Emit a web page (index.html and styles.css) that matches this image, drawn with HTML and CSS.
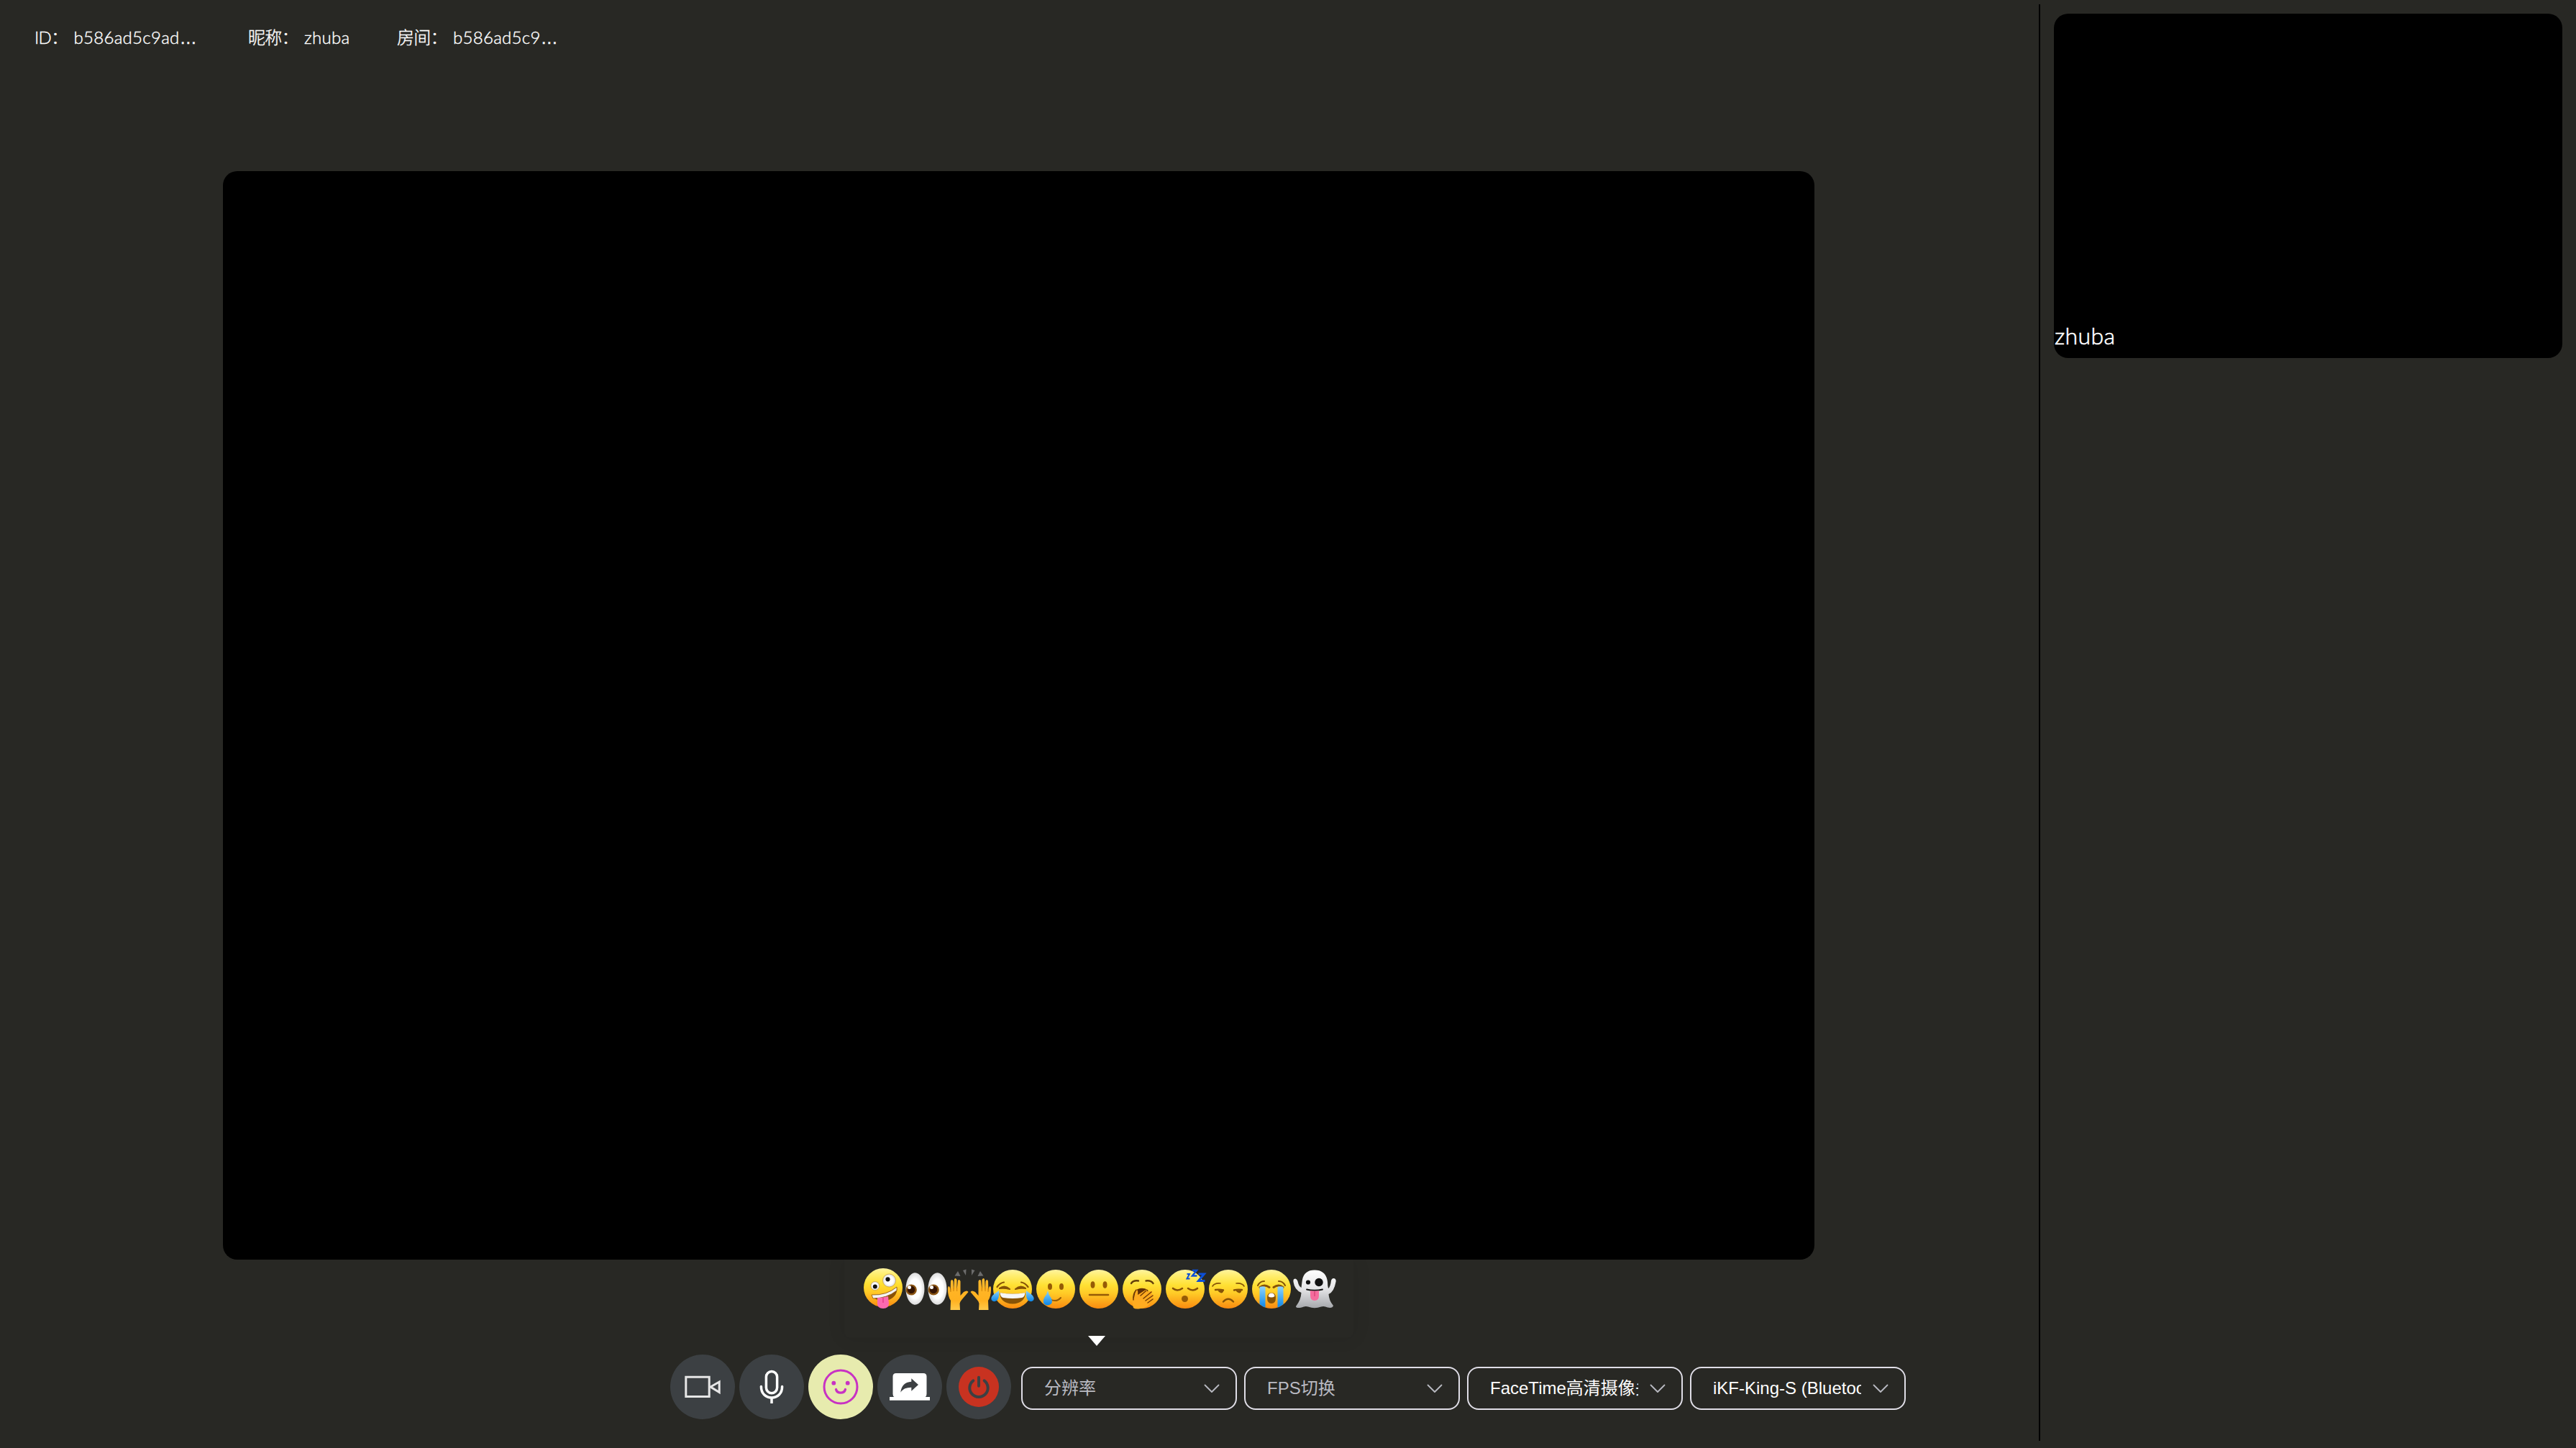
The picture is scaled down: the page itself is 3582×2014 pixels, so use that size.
FILE: index.html
```html
<!DOCTYPE html>
<html lang="zh-CN">
<head>
<meta charset="utf-8">
<title>zhuba</title>
<link rel="stylesheet" href="styles.css">
</head>
<body>
<svg class="defs" aria-hidden="true">
  <defs>
    <linearGradient id="face" x1="0" y1="0" x2="0" y2="1"><stop offset="0" stop-color="#fff3a0"/><stop offset=".15" stop-color="#ffee70"/><stop offset=".4" stop-color="#ffe033"/><stop offset=".62" stop-color="#ffc926"/><stop offset="1" stop-color="#f98a10"/></linearGradient>
    <linearGradient id="hand" x1="0" y1="0" x2="0" y2="1"><stop offset="0" stop-color="#ffb92b"/><stop offset=".7" stop-color="#ffb120"/><stop offset="1" stop-color="#ffc94a"/></linearGradient>
    <linearGradient id="tear" x1="0" y1="0" x2="0" y2="1"><stop offset="0" stop-color="#8fd4fb"/><stop offset="1" stop-color="#0a86e8"/></linearGradient>
    <linearGradient id="ghost" x1="0" y1="0" x2="0" y2="1"><stop offset="0" stop-color="#fff"/><stop offset=".5" stop-color="#e4e4e6"/><stop offset="1" stop-color="#a6a8ac"/></linearGradient>
    <radialGradient id="eye"><stop offset=".6" stop-color="#fff"/><stop offset="1" stop-color="#dcdcdc"/></radialGradient>
  </defs>
</svg>
<div class="app">
  <main class="main">
    <header class="info">
      <div class="info-item info-id"><span class="label label-id">ID：</span><span class="value">b586ad5c9ad<span class="ellipsis">…</span></span></div>
      <div class="info-item info-nick"><span class="label">昵称：</span><span class="value">zhuba</span></div>
      <div class="info-item"><span class="label">房间：</span><span class="value">b586ad5c9<span class="ellipsis">…</span></span></div>
    </header>
    <div class="stage"></div>
    <div class="popover-row">
      <div class="popover">
        <svg class="emoji" viewBox="0 0 60 60"><circle cx="30" cy="28" r="27" fill="url(#face)"/><circle cx="18.800" cy="25.500" r="6" fill="url(#eye)" stroke="#c99a3a" stroke-width=".7"/><circle cx="18.800" cy="26.500" r="3" fill="#111"/><circle cx="38.500" cy="18" r="9" fill="url(#eye)" stroke="#c99a3a" stroke-width=".7"/><circle cx="36.500" cy="16.300" r="3.100" fill="#111"/><path d="M14 38Q35 39 49 27Q51 39 38 45Q20 49 14 38Z" fill="#8a5206"/><path d="M14 38Q35 39 49 27L49 32Q35 43 16 43Z" fill="#f4f4f4" stroke="#8a5206" stroke-width=".8"/><path d="M22 42Q30 42 37 40L38 50Q38 57 30 57Q22 57 22 50Z" fill="#fb69b0"/><path d="M30 42L30 49" stroke="#e0307c" stroke-width="1.200"/></svg>
        <svg class="emoji" viewBox="0 0 60 60"><ellipse cx="14.500" cy="29.500" rx="13" ry="22.300" fill="url(#eye)"/><ellipse cx="45.500" cy="29.500" rx="13" ry="22.300" fill="url(#eye)"/><circle cx="9.200" cy="31" r="7.600" fill="#8a5412"/><circle cx="40.200" cy="31" r="7.600" fill="#8a5412"/><circle cx="9" cy="30.700" r="5.300" fill="#351503"/><circle cx="40" cy="30.700" r="5.300" fill="#351503"/><circle cx="6.500" cy="27.500" r="2.500" fill="#fff"/><circle cx="37.500" cy="27.500" r="2.500" fill="#fff"/></svg>
        <svg class="emoji" viewBox="0 0 60 60"><g fill="#6c6c6c"><path d="M9.500 11.500L14 5L17.500 12Z"/><path d="M21 4L25.500 2.500L25 11Z"/><path d="M33 2.500L37.500 4L33 11Z"/><path d="M45 5L49.500 11.500L41.500 12Z"/></g><g id="raised"><path d="M3.500 59L4 46Q-.5 39 0 28Q1 24 3 28L3.500 34L4 19Q5.500 15 7.500 19L8 32L9 16.500Q10.500 13.500 12.500 17L12.500 32L14 18Q16 15.500 17.500 19L17.500 39L22 34Q27 31 28.500 34L20 44Q17 47 16.500 50L17 59Z" fill="url(#hand)"/><path d="M4 29V34M8 28V33M12.700 28V33" stroke="#d18208" stroke-width="1" fill="none"/></g><use href="#raised" transform="translate(60 0) scale(-1 1)"/></svg>
        <svg class="emoji" viewBox="0 0 60 60"><circle cx="30" cy="30" r="27" fill="url(#face)"/><path d="M8.500 27Q13 21 18 20.500M51.500 27Q47 21 42 20.500M12 29Q19 24 26 30Q19 28 12 29ZM48 29Q41 24 34 30Q41 28 48 29Z" fill="none" stroke="#865307" stroke-width="2.200" stroke-linecap="round" stroke-linejoin="round"/><path d="M12 35Q30 38 48 35Q47 50 30 50.500Q13 50 12 35Z" fill="#865307"/><path d="M12.500 35Q30 38 47.500 35Q47 41 43 42Q30 44 17 42Q13 41 12.500 35Z" fill="#f7f7f7"/><path d="M11 32Q12 43 8 46Q4 48.500 1 45.500Q-1 42 3 38Q7 35 11 32Z" fill="url(#tear)"/><path d="M49 32Q48 43 52 46Q56 48.500 59 45.500Q61 42 57 38Q53 35 49 32Z" fill="url(#tear)"/></svg>
        <svg class="emoji" viewBox="0 0 60 60"><circle cx="30" cy="30" r="27" fill="url(#face)"/><ellipse cx="22" cy="26.500" rx="3" ry="4.500" fill="#955b06"/><ellipse cx="38" cy="26.500" rx="3" ry="4.500" fill="#955b06"/><path d="M22 44Q31 49 37 42" fill="none" stroke="#955b06" stroke-width="2" stroke-linecap="round"/><path d="M19 32Q20 38 24 43Q27 50 21 52Q15 53.500 13 49Q12 45 14 42Q18 37 19 32Z" fill="url(#tear)"/></svg>
        <svg class="emoji" viewBox="0 0 60 60"><circle cx="30" cy="30" r="27" fill="url(#face)"/><ellipse cx="21.500" cy="24" rx="3" ry="4.800" fill="#955b06"/><ellipse cx="38.500" cy="24" rx="3" ry="4.800" fill="#955b06"/><path d="M17 38H43" stroke="#955b06" stroke-width="2.600" stroke-linecap="round"/></svg>
        <svg class="emoji" viewBox="0 0 60 60"><circle cx="30" cy="30" r="27" fill="url(#face)"/><path d="M15 22Q18 17.500 25 18.500M35.500 18.500Q42 17.500 45.500 22" fill="none" stroke="#65400a" stroke-width="2.400" stroke-linecap="round"/><path d="M19 48Q16 34 24 30Q31 27 38 31L42 43Z" fill="#603006"/><path d="M18 56Q15 46 19 42Q20 35 22 31Q25 30 24 38L35 31Q38 30 37 33L43 33Q45 34 43 36L45 38Q46 40 44 42L45 45Q45 47 42 47Q39 56 28 57Q21 58.500 18 56Z" fill="#ffab20"/><path d="M28 39L36 32M32 43L43 34M35 46L45 39M38 49L45 44M18 45Q17 37 22 31" fill="none" stroke="#703a05" stroke-width="1.500" stroke-linecap="round"/></svg>
        <svg class="emoji" viewBox="0 0 60 60"><circle cx="30" cy="30" r="27" fill="url(#face)"/><path d="M13 29Q19 34 26 29M34 29Q41 34 47 29" fill="none" stroke="#865307" stroke-width="2.600" stroke-linecap="round"/><ellipse cx="29.500" cy="43.500" rx="4.500" ry="4.500" fill="#955b06"/><g fill="none" stroke="#0c4fd8" stroke-linejoin="miter"><path d="M32.500 9H36L32.500 15.500H36.500" stroke-width="2"/><path d="M40 4H46L40 11.500H46.500" stroke-width="2.500"/><path d="M48.500 9H56.500L48.500 18.500H57.500" stroke-width="3"/></g></svg>
        <svg class="emoji" viewBox="0 0 60 60"><circle cx="30" cy="30" r="27" fill="url(#face)"/><path d="M8 26Q11 21 19 22M41 22Q49 21 52 26" fill="none" stroke="#865307" stroke-width="1.600" stroke-linecap="round"/><path d="M12 31Q18 30 23 31.500M38 31.500Q43 30 49 31M23 47.500Q30 40 37 47.500" fill="none" stroke="#865307" stroke-width="2.400" stroke-linecap="round"/><path d="M15 31.500H23.500Q23 35.500 20 35.500Q17 35 15 31.500ZM40 31.500H48.500Q48 35.500 45 35.500Q42 35 40 31.500Z" fill="#865307"/></svg>
        <svg class="emoji" viewBox="0 0 60 60"><circle cx="30" cy="30" r="27" fill="url(#face)"/><path d="M11 25Q14 19 20 19M49 25Q46 19 40 19" fill="none" stroke="#865307" stroke-width="2" stroke-linecap="round"/><path d="M14 27.500Q20 22.500 27 27.500M33 27.500Q40 22.500 46 27.500" fill="none" stroke="#865307" stroke-width="3" stroke-linecap="round"/><path d="M13.500 27Q18 25.500 21.500 27V55.500Q17 54 13.500 51ZM46.500 27Q42 25.500 38.500 27V55.500Q43 54 46.500 51Z" fill="url(#tear)"/><path d="M24 42Q24 35 30 35Q36 35 36 42Q36 50 30 50Q24 50 24 42Z" fill="#865307"/><path d="M25.500 40Q26 35.500 30 35.500Q34 35.500 34.500 40Q30 43 25.500 40Z" fill="#fff"/></svg>
        <svg class="emoji" viewBox="0 0 60 60"><path d="M12.500 20Q14 3.500 30 3.500Q46 3.500 48 20Q48 26 49 29Q52 27 53 18Q54 14.500 57 15Q60.500 16 59.500 20Q57 34 49.500 37Q50 46 56 53Q55 57 48 55.500Q43 53 39 54.500Q30 58 21 54.500Q17 53 12 55.500Q4 57 4 54Q11 45 11.500 35Q2 31 .5 20Q0 15.500 3 15.500Q6 16 7 21Q8 26 11.500 28Z" fill="url(#ghost)"/><circle cx="21" cy="20.500" r="3.100" fill="#111"/><circle cx="36" cy="20.500" r="5.700" fill="#111"/><path d="M19 30.500Q30 33 41 30.500" fill="none" stroke="#111" stroke-width="1.800" stroke-linecap="round"/><path d="M24 32Q30 33 36 32V39Q36 46 30 46Q24 46 24 39Z" fill="#f56b9d"/><path d="M30 33V40" stroke="#cf3f70" stroke-width="1.200"/></svg>
        <span class="popover-arrow"></span>
      </div>
    </div>
    <div class="toolbar">
      <button class="tool" aria-label="camera"><svg viewBox="0 0 90 90" fill="none" stroke="#e6e6e6" stroke-width="3"><path d="M21.800 31.300H54.200V58.500H21.800Z"/><path d="M56 45L68.200 38V52.500Z"/></svg></button>
      <button class="tool" aria-label="microphone"><svg viewBox="0 0 90 90" fill="none" stroke="#fff" stroke-width="3.500" stroke-linecap="round"><rect x="37.400" y="23.500" width="15.200" height="30.200" rx="7.600"/><path d="M30.400 44.500C30.400 54 36.500 60 45 60S59.600 54 59.600 44.500"/><path d="M45 60V68" stroke-linecap="butt"/></svg></button>
      <button class="tool tool-active" aria-label="emoji"><svg viewBox="0 0 90 90" fill="none" stroke="#c832c3" stroke-width="3" stroke-linecap="round"><circle cx="45" cy="45" r="23"/><circle cx="35.300" cy="39.700" r="2.900" fill="#c832c3" stroke="none"/><circle cx="54.700" cy="39.700" r="2.900" fill="#c832c3" stroke="none"/><path d="M38.500 48.500A6.700 6.200 0 0 0 51.500 48.500" stroke-width="3.300"/></svg></button>
      <button class="tool" aria-label="share"><svg viewBox="0 0 90 90"><path d="M26 26H64Q68.500 26 68.500 30.500V55Q68.500 58 66.500 59H73V63.700H17V59H23.500Q21.500 58 21.500 55V30.500Q21.500 26 26 26Z" fill="#fff"/><path d="M57 42L47.300 33.300V37.700C38 38.500 33.500 43 32.300 52.700C36 47.500 40 46 47.300 45.800V50.700Z" fill="#3c4043"/></svg></button>
      <button class="tool" aria-label="power"><svg viewBox="0 0 90 90"><circle cx="45" cy="45" r="28" fill="#c83220"/><path d="M37.300 36.300A12.700 12.700 0 1 0 52.700 36.300M45 31.700V43.700" fill="none" stroke="#3c4043" stroke-width="4" stroke-linecap="round"/></svg></button>
      <div class="selects">
        <div class="select placeholder"><span class="select-text">分辨率</span><svg class="chevron" viewBox="0 0 22 13"><path d="M1.500 1.500L11 11L20.500 1.500"/></svg></div>
        <div class="select placeholder"><span class="select-text">FPS切换</span><svg class="chevron" viewBox="0 0 22 13"><path d="M1.500 1.500L11 11L20.500 1.500"/></svg></div>
        <div class="select"><span class="select-text">FaceTime高清摄像头</span><svg class="chevron" viewBox="0 0 22 13"><path d="M1.500 1.500L11 11L20.500 1.500"/></svg></div>
        <div class="select"><span class="select-text">iKF-King-S (Bluetooth)</span><svg class="chevron" viewBox="0 0 22 13"><path d="M1.500 1.500L11 11L20.500 1.500"/></svg></div>
      </div>
    </div>
  </main>
  <aside class="side">
    <div class="tile"><span class="tile-name">zhuba</span></div>
  </aside>
</div>
</body>
</html>
```
FILE: styles.css
```css
* {
  box-sizing: border-box;
}

body {
  margin: 0;
  background: #282824;
  color: #fff;
  font-family: Lato, "Noto Sans CJK SC", sans-serif;
}

.defs {
  position: absolute;
  width: 0;
  height: 0;
}

.app {
  display: flex;
  height: 2014px;
  padding: 6px 0 10px;
  overflow: hidden;
}

.main {
  display: flex;
  flex: 1;
  flex-direction: column;
  align-items: flex-start;
}

.info {
  display: flex;
  height: 232px;
  padding: 28px 0 0 48px;
  font-size: 24px;
  font-weight: 300;
  line-height: 36px;
  white-space: nowrap;
  -webkit-text-stroke: 0.4px #fff;
}

.info-item {
  display: flex;
}

.info-id {
  width: 297px;
}

.info-nick {
  width: 207px;
}

.label {
  width: 78px;
  letter-spacing: -0.8px;
}

.label-id {
  width: 54.5px;
}

.value {
  letter-spacing: 0.3px;
}

.ellipsis {
  font-family: "Liberation Sans", sans-serif;
}

.stage {
  width: 2213px;
  height: 1514px;
  margin-left: 310px;
  border-radius: 20px;
  background: #000;
}

.popover-row {
  width: 100%;
  height: 132px;
  padding-left: 1174px;
  overflow: hidden;
}

.popover {
  position: relative;
  display: flex;
  width: 708px;
  height: 108px;
  padding: 11px 24px 0;
  border-radius: 0 0 8px 8px;
  box-shadow: 0 0 24px rgba(0, 0, 0, 0.1);
}

.emoji {
  width: 60px;
  height: 60px;
  overflow: visible;
}

.popover-arrow {
  position: absolute;
  top: 106px;
  left: 339px;
  width: 24px;
  height: 14px;
  background: #fff;
  clip-path: polygon(0 0, 100% 0, 50% 100%);
}

.toolbar {
  display: flex;
  gap: 6px;
  height: 90px;
  margin-left: 932px;
}

.tool {
  width: 90px;
  height: 90px;
  padding: 0;
  border: 0;
  border-radius: 50%;
  background: #3c4043;
}

.tool svg {
  display: block;
  width: 90px;
  height: 90px;
}

.tool-active {
  background: #e7ebae;
}

.selects {
  display: flex;
  gap: 10px;
  margin: 17px 0 0 8px;
}

.select {
  display: flex;
  align-items: center;
  justify-content: space-between;
  width: 300px;
  height: 60px;
  padding: 0 22px 0 30px;
  border: 2px solid #dfdde6;
  border-radius: 16px;
  font: 24px "Liberation Sans", "Noto Sans CJK SC", sans-serif;
}

.placeholder {
  color: #b9bac2;
}

.select-text {
  width: 206px;
  overflow: hidden;
  line-height: 40px;
  white-space: nowrap;
}

.chevron {
  width: 22px;
  height: 13px;
  fill: none;
  stroke: #b9bac2;
  stroke-width: 1.8;
  stroke-linecap: round;
  stroke-linejoin: round;
}

.side {
  width: 747px;
  padding: 13px 19px;
  border-left: 2px solid #000;
}

.tile {
  display: flex;
  align-items: flex-end;
  height: 479px;
  padding: 0 0 11px 1px;
  border-radius: 20px;
  background: #000;
}

.tile-name {
  font-size: 32px;
  font-weight: 300;
  line-height: 40px;
  letter-spacing: 0.4px;
  -webkit-text-stroke: 0.6px #fff;
}
```
